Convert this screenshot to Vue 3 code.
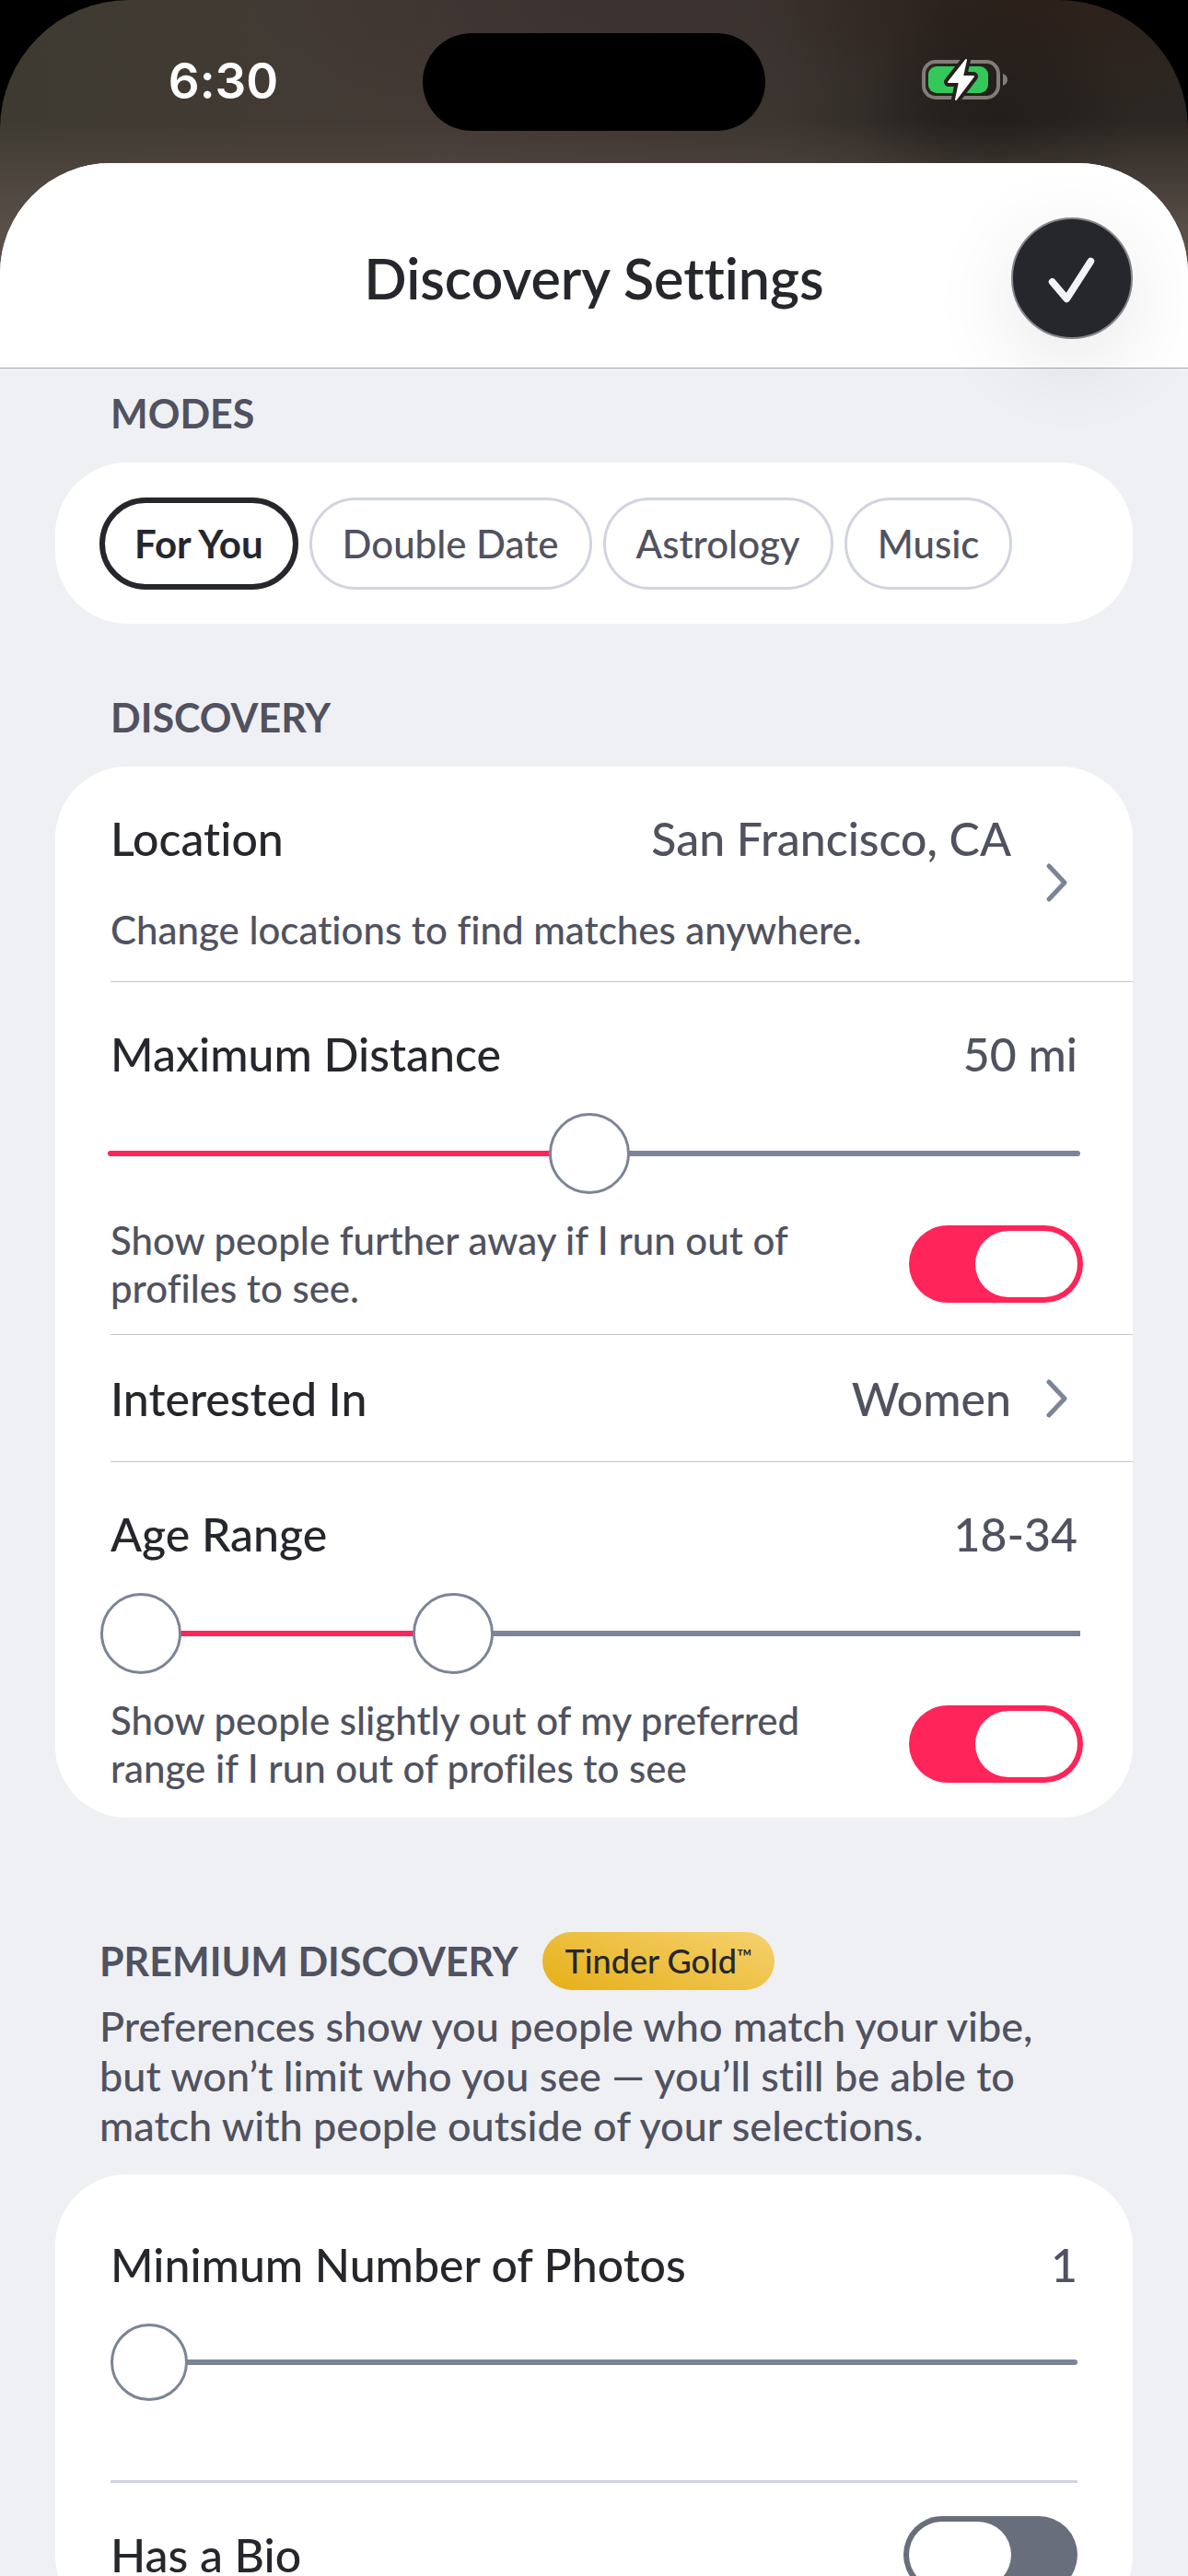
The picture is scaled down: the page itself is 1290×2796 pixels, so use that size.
<template>
  <div class="screen">
    <!-- Status bar -->
    <div class="status-bar">
      <span class="time">6:30</span>
      <span class="island"></span>
      <svg class="battery" viewBox="0 0 98 52" role="img" aria-label="Battery charging">
        <rect x="4" y="7" width="81" height="39" rx="13" fill="none" stroke="#827c78" stroke-width="4" />
        <path d="M90 20c3 1 5 3.500 5 6.500s-2 5.500-5 6.500z" fill="#827c78" />
        <rect x="9" y="12" width="65" height="29" rx="9" fill="#34c759" />
        <path class="bolt-edge" d="M50 5L31 29h12l-4 19 19-25H46z" />
        <path class="bolt" d="M50 5L31 29h12l-4 19 19-25H46z" />
      </svg>
    </div>

    <div class="sheet">
      <header class="sheet-header">
        <h1 class="sheet-title">Discovery Settings</h1>
        <button class="done-button" type="button" aria-label="Done">
          <svg viewBox="0 0 132 132" aria-hidden="true">
            <path d="M44 70l16 19 27-42" />
          </svg>
        </button>
      </header>

      <main class="content">
        <!-- Modes -->
        <section class="section">
          <h2 class="section-title">MODES</h2>
          <div class="card chips">
            <button
              v-for="mode in modes"
              :key="mode"
              type="button"
              class="chip"
              :class="{ active: mode === activeMode }"
              @click="activeMode = mode"
            >
              {{ mode }}
            </button>
          </div>
        </section>

        <!-- Discovery -->
        <section class="section discovery">
          <h2 class="section-title">DISCOVERY</h2>
          <div class="card">
            <button type="button" class="row link-row location-row">
              <span class="row-body">
                <span class="row-head">
                  <span class="label">Location</span>
                  <span class="value">San Francisco, CA</span>
                </span>
                <span class="hint">Change locations to find matches anywhere.</span>
              </span>
              <svg class="chevron" viewBox="0 0 48 48" aria-hidden="true"><path d="M17 6l17 18-17 18" /></svg>
            </button>

            <div class="row">
              <div class="row-head">
                <label class="label" for="distance">Maximum Distance</label>
                <span class="value">{{ distance }} mi</span>
              </div>
              <input
                id="distance"
                v-model.number="distance"
                class="slider wide"
                type="range"
                min="1"
                max="100"
                :style="{ '--fill': distanceFill }"
              />
              <div class="toggle-line">
                <label class="hint" for="distance-extend">Show people further away if I run out of profiles to see.</label>
                <input id="distance-extend" v-model="extendDistance" class="toggle" type="checkbox" />
              </div>
            </div>

            <button type="button" class="row link-row interest-row">
              <span class="row-body">
                <span class="row-head">
                  <span class="label">Interested In</span>
                  <span class="value">Women</span>
                </span>
              </span>
              <svg class="chevron" viewBox="0 0 48 48" aria-hidden="true"><path d="M17 6l17 18-17 18" /></svg>
            </button>

            <div class="row">
              <div class="row-head">
                <span class="label">Age Range</span>
                <span class="value">{{ minAge }}-{{ maxAge }}</span>
              </div>
              <div class="dual-slider" :style="{ '--from': ageFrom, '--to': ageTo }">
                <input v-model.number="minAge" class="slider" type="range" min="18" max="64" aria-label="Minimum age" />
                <input v-model.number="maxAge" class="slider" type="range" min="18" max="64" aria-label="Maximum age" />
              </div>
              <div class="toggle-line">
                <label class="hint" for="age-extend">Show people slightly out of my preferred range if I run out of profiles to see</label>
                <input id="age-extend" v-model="extendAge" class="toggle" type="checkbox" />
              </div>
            </div>
          </div>
        </section>

        <!-- Premium discovery -->
        <section class="section premium">
          <div class="premium-head">
            <h2 class="premium-title">PREMIUM DISCOVERY</h2>
            <span class="gold-badge">Tinder Gold<sup>™</sup></span>
          </div>
          <p class="premium-text">
            Preferences show you people who match your vibe, but won’t limit who you see — you’ll still be able to match
            with people outside of your selections.
          </p>
          <div class="card premium-card">
            <div class="photo-row">
              <div class="row-head">
                <label class="label" for="photos">Minimum Number of Photos</label>
                <span class="value">{{ photos }}</span>
              </div>
              <input id="photos" v-model.number="photos" class="slider small" type="range" min="1" max="9" />
            </div>
            <div class="bio-row">
              <label class="label" for="bio">Has a Bio</label>
              <input id="bio" v-model="hasBio" class="toggle" type="checkbox" />
            </div>
          </div>
        </section>
      </main>
    </div>
  </div>
</template>

<script setup>
import { ref, computed } from 'vue';

const modes = ['For You', 'Double Date', 'Astrology', 'Music'];
const activeMode = ref('For You');

const distance = ref(50);
const extendDistance = ref(true);
const minAge = ref(18);
const maxAge = ref(34);
const extendAge = ref(true);
const photos = ref(1);
const hasBio = ref(false);

const agePercent = (age) => `${((age - 18) / 46) * 100}%`;

const distanceFill = computed(() => `${distance.value}%`);
const ageFrom = computed(() => agePercent(minAge.value));
const ageTo = computed(() => agePercent(maxAge.value));
</script>

<style>
body {
  margin: 0;
  background: #000;
}
</style>

<style scoped>
.screen {
  height: 100vh;
  display: flex;
  flex-direction: column;
  overflow: hidden;
  border-radius: 140px 140px 0 0;
  font-family: "Lato", "Open Sans", sans-serif;
  font-weight: 500;
  font-variant-ligatures: none;
  color: #25272c;
  background:
    linear-gradient(180deg, rgba(90, 79, 73, 0) 130px, #5a4f49 250px),
    radial-gradient(ellipse 150px 180px at 84% 160px, rgba(30, 26, 22, 0.8), rgba(30, 26, 22, 0)),
    radial-gradient(ellipse 320px 130px at 88% 0, rgba(46, 32, 26, 0.9), rgba(46, 32, 26, 0)),
    radial-gradient(ellipse 380px 150px at 50% 0, rgba(58, 48, 46, 0.8), rgba(58, 48, 46, 0)),
    linear-gradient(90deg, #3e3a31 0%, #443a35 38%, #3b342f 66%, #2b2622 80%, #2c2722 100%);
}

/* Status bar */
.status-bar {
  flex: none;
  height: 177px;
  box-sizing: border-box;
  padding: 36px 26px 0;
  display: grid;
  grid-template-columns: 1fr 372px 1fr;
  align-items: start;
  justify-items: center;
}

.time {
  font-family: "Inter", sans-serif;
  font-size: 53px;
  font-weight: 600;
  line-height: 104px;
  color: #fff;
}

.island {
  width: 100%;
  height: 106px;
  border-radius: 53px;
  background: #000;
}

.battery {
  width: 98px;
  height: 52px;
  margin-top: 24px;
}

.bolt-edge {
  fill: #26201c;
  stroke: #26201c;
  stroke-width: 10;
  stroke-linejoin: round;
}

.bolt {
  fill: #fff;
  stroke: #fff;
  stroke-width: 2;
  stroke-linejoin: round;
}

/* Sheet */
.sheet {
  flex: 1;
  min-height: 0;
  display: flex;
  flex-direction: column;
  overflow: hidden;
  border-radius: 120px 120px 0 0;
  background: #eff0f4;
}

.sheet-header {
  flex: none;
  position: relative;
  z-index: 1;
  display: grid;
  grid-template-columns: 1fr auto 1fr;
  align-items: center;
  padding: 59px 60px 31px;
  background: #fff;
  border-bottom: 1px solid #a8a6ac;
}

.sheet-title {
  grid-column: 2;
  margin: 0;
  font-size: 61px;
  line-height: 72px;
  font-weight: 600;
}

.done-button {
  justify-self: end;
  width: 132px;
  height: 132px;
  padding: 0;
  border: 2px solid #85858c;
  border-radius: 50%;
  background: #25272c;
  box-shadow: 0 24px 96px rgba(0, 0, 0, 0.1);
}

.done-button svg {
  display: block;
  width: 100%;
  height: 100%;
}

.done-button path {
  fill: none;
  stroke: #f1f3f8;
  stroke-width: 8;
  stroke-linecap: round;
  stroke-linejoin: round;
}

.content {
  flex: 1;
  min-height: 0;
  overflow-y: auto;
  scrollbar-width: none;
  padding: 23px 60px 0;
}

.section-title {
  margin: 0 60px 27px;
  font-size: 43px;
  line-height: 52px;
  font-weight: 700;
  color: #505260;
}

.discovery {
  margin-top: 76px;
}

.card {
  border-radius: 78px;
  background: #fff;
}

/* Mode chips */
.chips {
  display: flex;
  gap: 12px;
  padding: 38px 48px 37px;
}

.chip {
  height: 100px;
  padding: 0 33px;
  border: 3px solid #d1d4e0;
  border-radius: 50px;
  background: none;
  font: inherit;
  font-size: 42px;
  color: #505260;
  white-space: nowrap;
}

.chip.active {
  padding: 0 32px;
  border: 6px solid #25272c;
  font-weight: 700;
  color: #25272c;
}

/* Rows */
.row {
  margin-left: 60px;
  padding: 48px 60px 24px 0;
  border-bottom: 1px solid #c6c6c8;
}

.row:last-child {
  padding-bottom: 28px;
  border-bottom: none;
}

.link-row {
  display: flex;
  align-items: center;
  gap: 24px;
  width: calc(100% - 60px);
  border-width: 0 0 1px;
  background: none;
  font: inherit;
  color: inherit;
  text-align: left;
}

.location-row {
  padding-bottom: 30px;
}

.interest-row {
  padding-top: 39px;
  padding-bottom: 38px;
}

.row-body {
  flex: 1;
  display: flex;
  flex-direction: column;
  gap: 43px;
}

.row-head {
  display: flex;
  justify-content: space-between;
  font-size: 50px;
  line-height: 60px;
}

.value {
  color: #505260;
}

.hint {
  font-size: 42px;
  line-height: 52px;
  color: #505260;
}

.chevron {
  flex: none;
  width: 48px;
  height: 48px;
  fill: none;
  stroke: #7c8497;
  stroke-width: 5;
  stroke-linecap: round;
  stroke-linejoin: round;
}

.toggle-line {
  display: flex;
  align-items: center;
  justify-content: space-between;
  margin-top: 24px;
  margin-right: -6px;
}

.toggle-line .hint {
  width: 780px;
}

/* Sliders */
.slider {
  --thumb: 88px;
  appearance: none;
  display: block;
  width: 100%;
  height: var(--thumb);
  margin: 34px 0 0;
  background: none;
}

.slider.wide {
  width: calc(100% + 6px);
  margin-left: -3px;
}

.slider.small {
  --thumb: 84px;
}

.slider::-webkit-slider-runnable-track {
  height: 6px;
  border-radius: 3px;
  background: linear-gradient(90deg, #ff2459 var(--fill, 0%), #7c8497 var(--fill, 0%));
}

.slider::-webkit-slider-thumb {
  appearance: none;
  box-sizing: border-box;
  width: var(--thumb);
  height: var(--thumb);
  margin-top: calc(3px - var(--thumb) / 2);
  border: 3px solid #7c8497;
  border-radius: 50%;
  background: #fff;
}

.dual-slider {
  display: grid;
  margin: 34px -3px 0 -11px;
  background: linear-gradient(
      90deg,
      #7c8497 var(--from),
      #ff2459 var(--from),
      #ff2459 var(--to),
      #7c8497 var(--to)
    )
    right center / calc(100% - 16px) 6px no-repeat;
}

.dual-slider .slider {
  grid-area: 1 / 1;
  margin: 0;
  pointer-events: none;
}

.dual-slider .slider::-webkit-slider-runnable-track {
  background: none;
}

.dual-slider .slider::-webkit-slider-thumb {
  pointer-events: auto;
}

/* Toggles */
.toggle {
  appearance: none;
  flex: none;
  display: flex;
  box-sizing: border-box;
  width: 189px;
  height: 84px;
  margin: 0;
  padding: 6px;
  border-radius: 42px;
  background: #696e7c;
}

.toggle::before {
  content: "";
  width: 111px;
  height: 72px;
  border-radius: 36px;
  background: #fff;
}

.toggle:checked {
  justify-content: flex-end;
  background: #ff2459;
}

/* Premium */
.premium {
  margin-top: 124px;
}

.premium-head {
  display: flex;
  align-items: center;
  gap: 26px;
  margin: 0 48px;
}

.premium-title {
  margin: 0;
  font-size: 43px;
  line-height: 52px;
  font-weight: 700;
  color: #505260;
}

.gold-badge {
  height: 63px;
  padding: 0 25px;
  border-radius: 32px;
  background: linear-gradient(20deg, #e5af18, #f6d26f);
  font-size: 36px;
  line-height: 63px;
}

.gold-badge sup {
  font-size: 22px;
  line-height: 0;
  vertical-align: 10px;
}

.premium-text {
  margin: 12px 48px 26px;
  font-size: 45px;
  line-height: 54px;
  color: #505260;
}

.premium-card {
  padding: 68px 60px 36px;
}

.photo-row {
  padding-bottom: 86px;
  border-bottom: 3px solid #d1d4e0;
}

.bio-row {
  display: flex;
  align-items: center;
  justify-content: space-between;
  padding-top: 36px;
  font-size: 50px;
  line-height: 60px;
}
</style>
